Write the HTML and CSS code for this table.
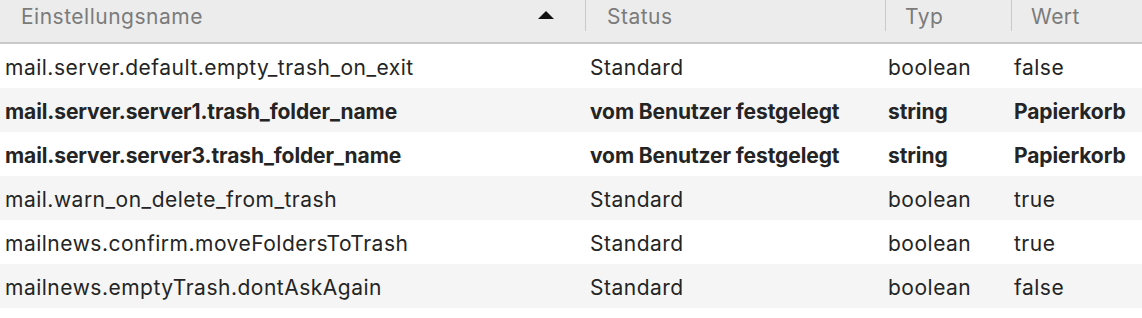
FILE: index.html
```html
<!DOCTYPE html>
<html lang="de">
<head>
<meta charset="utf-8">
<link rel="stylesheet" href="styles.css">
</head>
<body>
<div class="table">
  <div class="row head">
    <div class="cell c1"><span>Einstellungsname</span><span class="sort"></span></div>
    <div class="cell c2">Status</div>
    <div class="cell c3">Typ</div>
    <div class="cell c4">Wert</div>
  </div>
  <div class="row">
    <div class="cell c1">mail.server.default.empty_trash_on_exit</div>
    <div class="cell c2">Standard</div>
    <div class="cell c3">boolean</div>
    <div class="cell c4">false</div>
  </div>
  <div class="row alt bold">
    <div class="cell c1">mail.server.server1.trash_folder_name</div>
    <div class="cell c2">vom Benutzer festgelegt</div>
    <div class="cell c3">string</div>
    <div class="cell c4">Papierkorb</div>
  </div>
  <div class="row bold">
    <div class="cell c1">mail.server.server3.trash_folder_name</div>
    <div class="cell c2">vom Benutzer festgelegt</div>
    <div class="cell c3">string</div>
    <div class="cell c4">Papierkorb</div>
  </div>
  <div class="row alt">
    <div class="cell c1">mail.warn_on_delete_from_trash</div>
    <div class="cell c2">Standard</div>
    <div class="cell c3">boolean</div>
    <div class="cell c4">true</div>
  </div>
  <div class="row">
    <div class="cell c1">mailnews.confirm.moveFoldersToTrash</div>
    <div class="cell c2">Standard</div>
    <div class="cell c3">boolean</div>
    <div class="cell c4">true</div>
  </div>
  <div class="row alt">
    <div class="cell c1">mailnews.emptyTrash.dontAskAgain</div>
    <div class="cell c2">Standard</div>
    <div class="cell c3">boolean</div>
    <div class="cell c4">false</div>
  </div>
</div>
</body>
</html>
```
FILE: styles.css
```css
* { box-sizing: border-box; }
html, body { margin: 0; padding: 0; background: #ffffff; }
body {
  font-family: Inter, "Liberation Sans", sans-serif;
  font-size: 21px;
  letter-spacing: 0.5px;
  color: #242424;
  width: 1142px;
  height: 318px;
  overflow: hidden;
}
.table { display: flex; flex-direction: column; }
.row {
  display: grid;
  grid-template-columns: 585px 300px 126px 1fr;
  height: 44px;
  align-items: center;
}
.row.alt { background: #f5f5f5; }
.row.bold { font-weight: 700; letter-spacing: -0.1px; }
.cell { padding-left: 5px; white-space: nowrap; overflow: hidden; padding-top: 3px; }
.cell.c3, .cell.c4 { padding-left: 3px; }
.head {
  height: 44px;
  background: #ececec;
  border-bottom: 2px solid #c9c9c9;
  color: #7b7b7b;
  align-items: start;
}
.head .cell {
  padding-left: 21px;
  padding-top: 1px;
  height: 31px;
  display: flex;
  align-items: center;
}
.head .cell + .cell { border-left: 1px solid #c9c9c9; padding-left: 21px; }
.head .cell.c3, .head .cell.c4 { padding-left: 19px; }
.head .c1 { justify-content: space-between; padding-right: 31px; }
.sort {
  width: 0; height: 0;
  border-left: 8.5px solid transparent;
  border-right: 8.5px solid transparent;
  border-bottom: 8px solid #111111;
  margin-top: -2px;
}
```
